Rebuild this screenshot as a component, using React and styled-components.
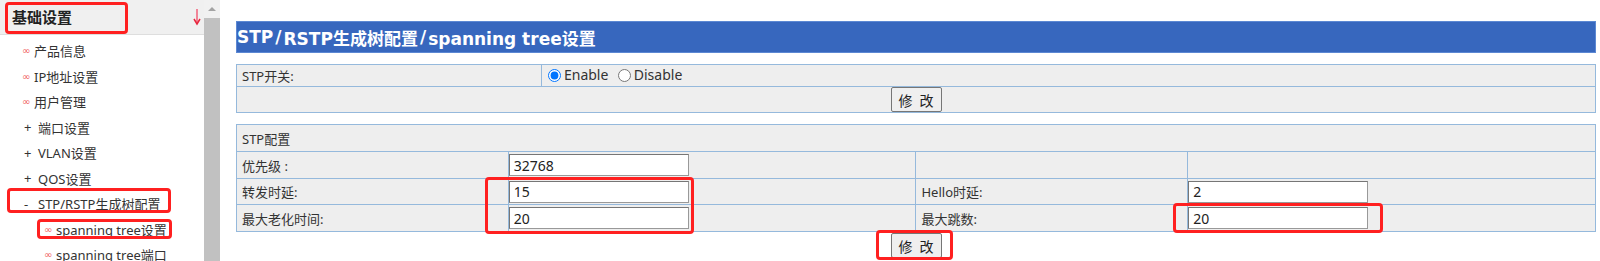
import React from 'react';
import styled, { createGlobalStyle, css } from 'styled-components';

const Global = createGlobalStyle`
  html, body { margin: 0; padding: 0; background: #fff; }
  body {
    font-family: "Noto Sans", "Noto Sans CJK SC", sans-serif;
    font-size: 13px;
    color: #333;
  }
`;

const redBox = css`
  position: relative;
  &::after {
    content: '';
    position: absolute;
    left: ${(p) => p.$box.l}px;
    top: ${(p) => p.$box.t}px;
    width: ${(p) => p.$box.w}px;
    height: ${(p) => p.$box.h}px;
    box-sizing: border-box;
    border: 3px solid #ff2020;
    border-radius: 4px;
    pointer-events: none;
    z-index: 2;
  }
`;

const Page = styled.div`
  display: flex;
  height: 261px;
  overflow: hidden;
`;

const Sidebar = styled.aside`
  width: 220px;
  flex: none;
  display: flex;
`;

const Menu = styled.nav`
  width: 204px;
  flex: none;
`;

const MenuHeader = styled.div`
  height: 35px;
  box-sizing: border-box;
  background: #f0f0f0;
  border-bottom: 1px solid #dedede;
  display: flex;
  align-items: center;
  justify-content: space-between;
  padding: 0 3px 0 12px;
`;

const HeaderTitle = styled.span`
  font-weight: bold;
  font-size: 15px;
  line-height: 20px;
  color: #222;
  ${(p) => p.$box && redBox}
`;

const MenuList = styled.ul`
  list-style: none;
  margin: 0;
  padding: 3px 0 0;
`;

const MenuItem = styled.li`
  height: 25.5px;
  display: flex;
  align-items: center;
  padding-left: ${(p) => p.$indent}px;
  white-space: nowrap;
  ${(p) => p.$box && redBox}
`;

const Marker = styled.span`
  width: ${(p) => p.$w}px;
  flex: none;
  color: ${(p) => (p.$inf ? '#f05a5a' : '#333')};
  font-family: ${(p) => (p.$inf ? '"DejaVu Sans", sans-serif' : 'inherit')};
  font-size: ${(p) => (p.$inf ? '10px' : '13px')};
`;

const ScrollTrack = styled.div`
  width: 16px;
  flex: none;
  background: #f1f1f1;
  display: flex;
  flex-direction: column;
`;

const ScrollArrow = styled.div`
  height: 18px;
  display: flex;
  align-items: center;
  justify-content: center;
  &::before {
    content: '';
    border-left: 4px solid transparent;
    border-right: 4px solid transparent;
    border-bottom: 4px solid #a3a3a3;
  }
`;

const ScrollThumb = styled.div`
  flex: 1;
  background: #c1c1c1;
`;

const Main = styled.main`
  flex: 1;
  min-width: 0;
  padding: 21px 4px 0 16px;
`;

const TitleBar = styled.h1`
  margin: 0;
  height: 32px;
  box-sizing: border-box;
  background: #3767be;
  border: 1px solid #5c88d3;
  color: #fff;
  font: bold 17px "DejaVu Sans", "Noto Sans CJK SC", sans-serif;
  display: flex;
  align-items: center;
  padding-left: 0;
  white-space: nowrap;
`;

const Slash = styled.span`
  padding: 0 2px;
`;

const Grid = styled.table`
  width: 100%;
  border-collapse: collapse;
  margin-top: 11px;
  background: #eeeeee;
  table-layout: fixed;
`;

const Cell = styled.td`
  border: 1px solid #95b9dc;
  padding: 0 0 0 ${(p) => (p.$pad ?? 5)}px;
  height: ${(p) => p.$h}px;
  width: ${(p) => p.$w || 'auto'};
  vertical-align: middle;
  text-align: ${(p) => (p.$center ? 'center' : 'left')};
  white-space: nowrap;
`;

const RadioLabel = styled.label`
  display: inline-flex;
  align-items: center;
  font-size: 14px;
  input {
    margin: 2px 3px 0 6px;
    width: 13px;
    height: 13px;
  }
`;

const Field = styled.span`
  display: inline-flex;
  vertical-align: middle;
  ${(p) => p.$box && redBox}
`;

const TextInput = styled.input`
  width: 180px;
  height: 22px;
  box-sizing: border-box;
  border: 1px solid #999;
  border-top-color: #767676;
  border-left-color: #767676;
  padding: 0 4px;
  font: 14px "Noto Sans", sans-serif;
  color: #222;
  background: #fff;
  outline: none;
`;

const ButtonWrap = styled.span`
  display: inline-flex;
  ${(p) => p.$box && redBox}
`;

const Button = styled.button`
  width: 51px;
  height: 25px;
  box-sizing: border-box;
  border: 1px solid #767676;
  border-radius: 2px;
  background: #efefef;
  color: #222;
  font: 14px "Noto Sans CJK SC", sans-serif;
  padding: 0;
  word-spacing: 4px;
  cursor: pointer;
`;

const Footer = styled.div`
  text-align: center;
  margin-top: 1px;
`;

const DownArrow = () => (
  <svg width="8" height="18" viewBox="0 0 8 18">
    <line x1="4" y1="1" x2="4" y2="14" stroke="#f2607a" strokeWidth="1.5" />
    <path d="M1 11 L4 16 L7 11" fill="none" stroke="#e8243c" strokeWidth="1.5" />
  </svg>
);

const menu = [
  { m: '∞', t: '产品信息', lvl: 0 },
  { m: '∞', t: 'IP地址设置', lvl: 0 },
  { m: '∞', t: '用户管理', lvl: 0 },
  { m: '+', t: '端口设置', lvl: 1 },
  { m: '+', t: 'VLAN设置', lvl: 1 },
  { m: '+', t: 'QOS设置', lvl: 1 },
  { m: '-', t: 'STP/RSTP生成树配置', lvl: 1, box: { l: 7, t: -3, w: 164, h: 25 } },
  { m: '∞', t: 'spanning tree设置', lvl: 2, box: { l: 37, t: 2.5, w: 135, h: 20 } },
  { m: '∞', t: 'spanning tree端口', lvl: 2 },
];

const indent = [22, 24, 44];
const markW = [12, 14, 12];

export default function App() {
  return (
    <>
      <Global />
      <Page>
        <Sidebar>
          <Menu>
            <MenuHeader>
              <HeaderTitle $box={{ l: -7, t: -5, w: 123, h: 32 }}>基础设置</HeaderTitle>
              <DownArrow />
            </MenuHeader>
            <MenuList>
              {menu.map((it) => (
                <MenuItem key={it.t} $indent={indent[it.lvl]} $box={it.box}>
                  <Marker $w={markW[it.lvl]} $inf={it.m === '∞'}>{it.m}</Marker>
                  {it.t}
                </MenuItem>
              ))}
            </MenuList>
          </Menu>
          <ScrollTrack>
            <ScrollArrow />
            <ScrollThumb />
          </ScrollTrack>
        </Sidebar>
        <Main>
          <TitleBar>
            STP<Slash>/</Slash>RSTP生成树配置<Slash>/</Slash>spanning tree设置
          </TitleBar>
          <Grid>
            <tbody>
              <tr>
                <Cell $h={21} $w="22%">STP开关:</Cell>
                <Cell $h={21} $pad={0}>
                  <RadioLabel>
                    <input type="radio" name="stp" defaultChecked />
                    Enable
                  </RadioLabel>{' '}
                  <RadioLabel>
                    <input type="radio" name="stp" />
                    Disable
                  </RadioLabel>
                </Cell>
              </tr>
              <tr>
                <Cell $h={25} $pad={0} $center colSpan={2}>
                  <Button>修 改</Button>
                </Cell>
              </tr>
            </tbody>
          </Grid>
          <Grid>
            <colgroup>
              <col style={{ width: '20%' }} />
              <col style={{ width: '30%' }} />
              <col style={{ width: '20%' }} />
              <col style={{ width: '30%' }} />
            </colgroup>
            <tbody>
              <tr>
                <Cell $h={26} colSpan={4}>STP配置</Cell>
              </tr>
              <tr>
                <Cell $h={26}>优先级 :</Cell>
                <Cell $h={26} $pad={0}>
                  <Field>
                    <TextInput defaultValue="32768" />
                  </Field>
                </Cell>
                <Cell $h={26} />
                <Cell $h={26} />
              </tr>
              <tr>
                <Cell $h={25}>转发时延:</Cell>
                <Cell $h={25} $pad={0}>
                  <Field $box={{ l: -24, t: -4, w: 209, h: 57 }}>
                    <TextInput defaultValue="15" />
                  </Field>
                </Cell>
                <Cell $h={25}>Hello时延:</Cell>
                <Cell $h={25} $pad={0}>
                  <Field>
                    <TextInput defaultValue="2" />
                  </Field>
                </Cell>
              </tr>
              <tr>
                <Cell $h={26}>最大老化时间:</Cell>
                <Cell $h={26} $pad={0}>
                  <Field>
                    <TextInput defaultValue="20" />
                  </Field>
                </Cell>
                <Cell $h={26}>最大跳数:</Cell>
                <Cell $h={26} $pad={0}>
                  <Field $box={{ l: -15, t: -4, w: 210, h: 30 }}>
                    <TextInput defaultValue="20" />
                  </Field>
                </Cell>
              </tr>
            </tbody>
          </Grid>
          <Footer>
            <ButtonWrap $box={{ l: -15, t: -3, w: 77, h: 30 }}>
              <Button>修 改</Button>
            </ButtonWrap>
          </Footer>
        </Main>
      </Page>
    </>
  );
}
